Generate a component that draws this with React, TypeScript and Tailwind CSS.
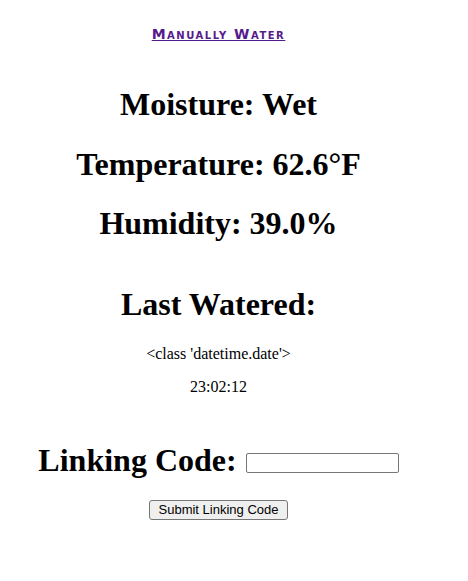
export default function App() {
  const serif = { fontFamily: '"Liberation Serif", "Times New Roman", serif' };
  return (
    <div className="w-[468px] h-[581px] bg-white">
      <div className="flex flex-col items-center text-black w-[437px]" style={serif}>
        <a
          href="#"
          className="mt-[27px] text-[14px] leading-[15px] text-[#551a8b] underline tracking-[1.5px] font-semibold [font-variant:small-caps]"
          style={{ fontFamily: '"DejaVu Sans", sans-serif' }}
        >
          Manually Water
        </a>
        <div className="mt-[44px] text-[32px] leading-[37px] font-bold">Moisture: Wet</div>
        <div className="mt-[23px] text-[32px] leading-[37px] font-bold">Temperature: 62.6°F</div>
        <div className="mt-[22px] text-[32px] leading-[37px] font-bold">Humidity: 39.0%</div>
        <div className="mt-[44px] text-[32px] leading-[37px] font-bold">Last Watered:</div>
        <div className="mt-[22px] text-[16px] leading-[18px]">&lt;class 'datetime.date'&gt;</div>
        <div className="mt-[15px] text-[16px] leading-[18px]">23:02:12</div>
        <div className="mt-[46px] flex items-center">
          <span className="text-[32px] leading-[37px] font-bold">Linking Code:</span>
          <input
            type="text"
            className="ml-[9px] mt-[4px] w-[153px] h-[20px] border border-[#767676] rounded-[2px] bg-white"
          />
        </div>
        <button
          className="mt-[21px] h-[20px] px-[9px] text-[13px] leading-[16px] border border-[#767676] rounded-[3px] bg-[#efefef]"
          style={{ fontFamily: '"Liberation Sans", Arial, sans-serif' }}
        >
          Submit Linking Code
        </button>
      </div>
    </div>
  );
}
